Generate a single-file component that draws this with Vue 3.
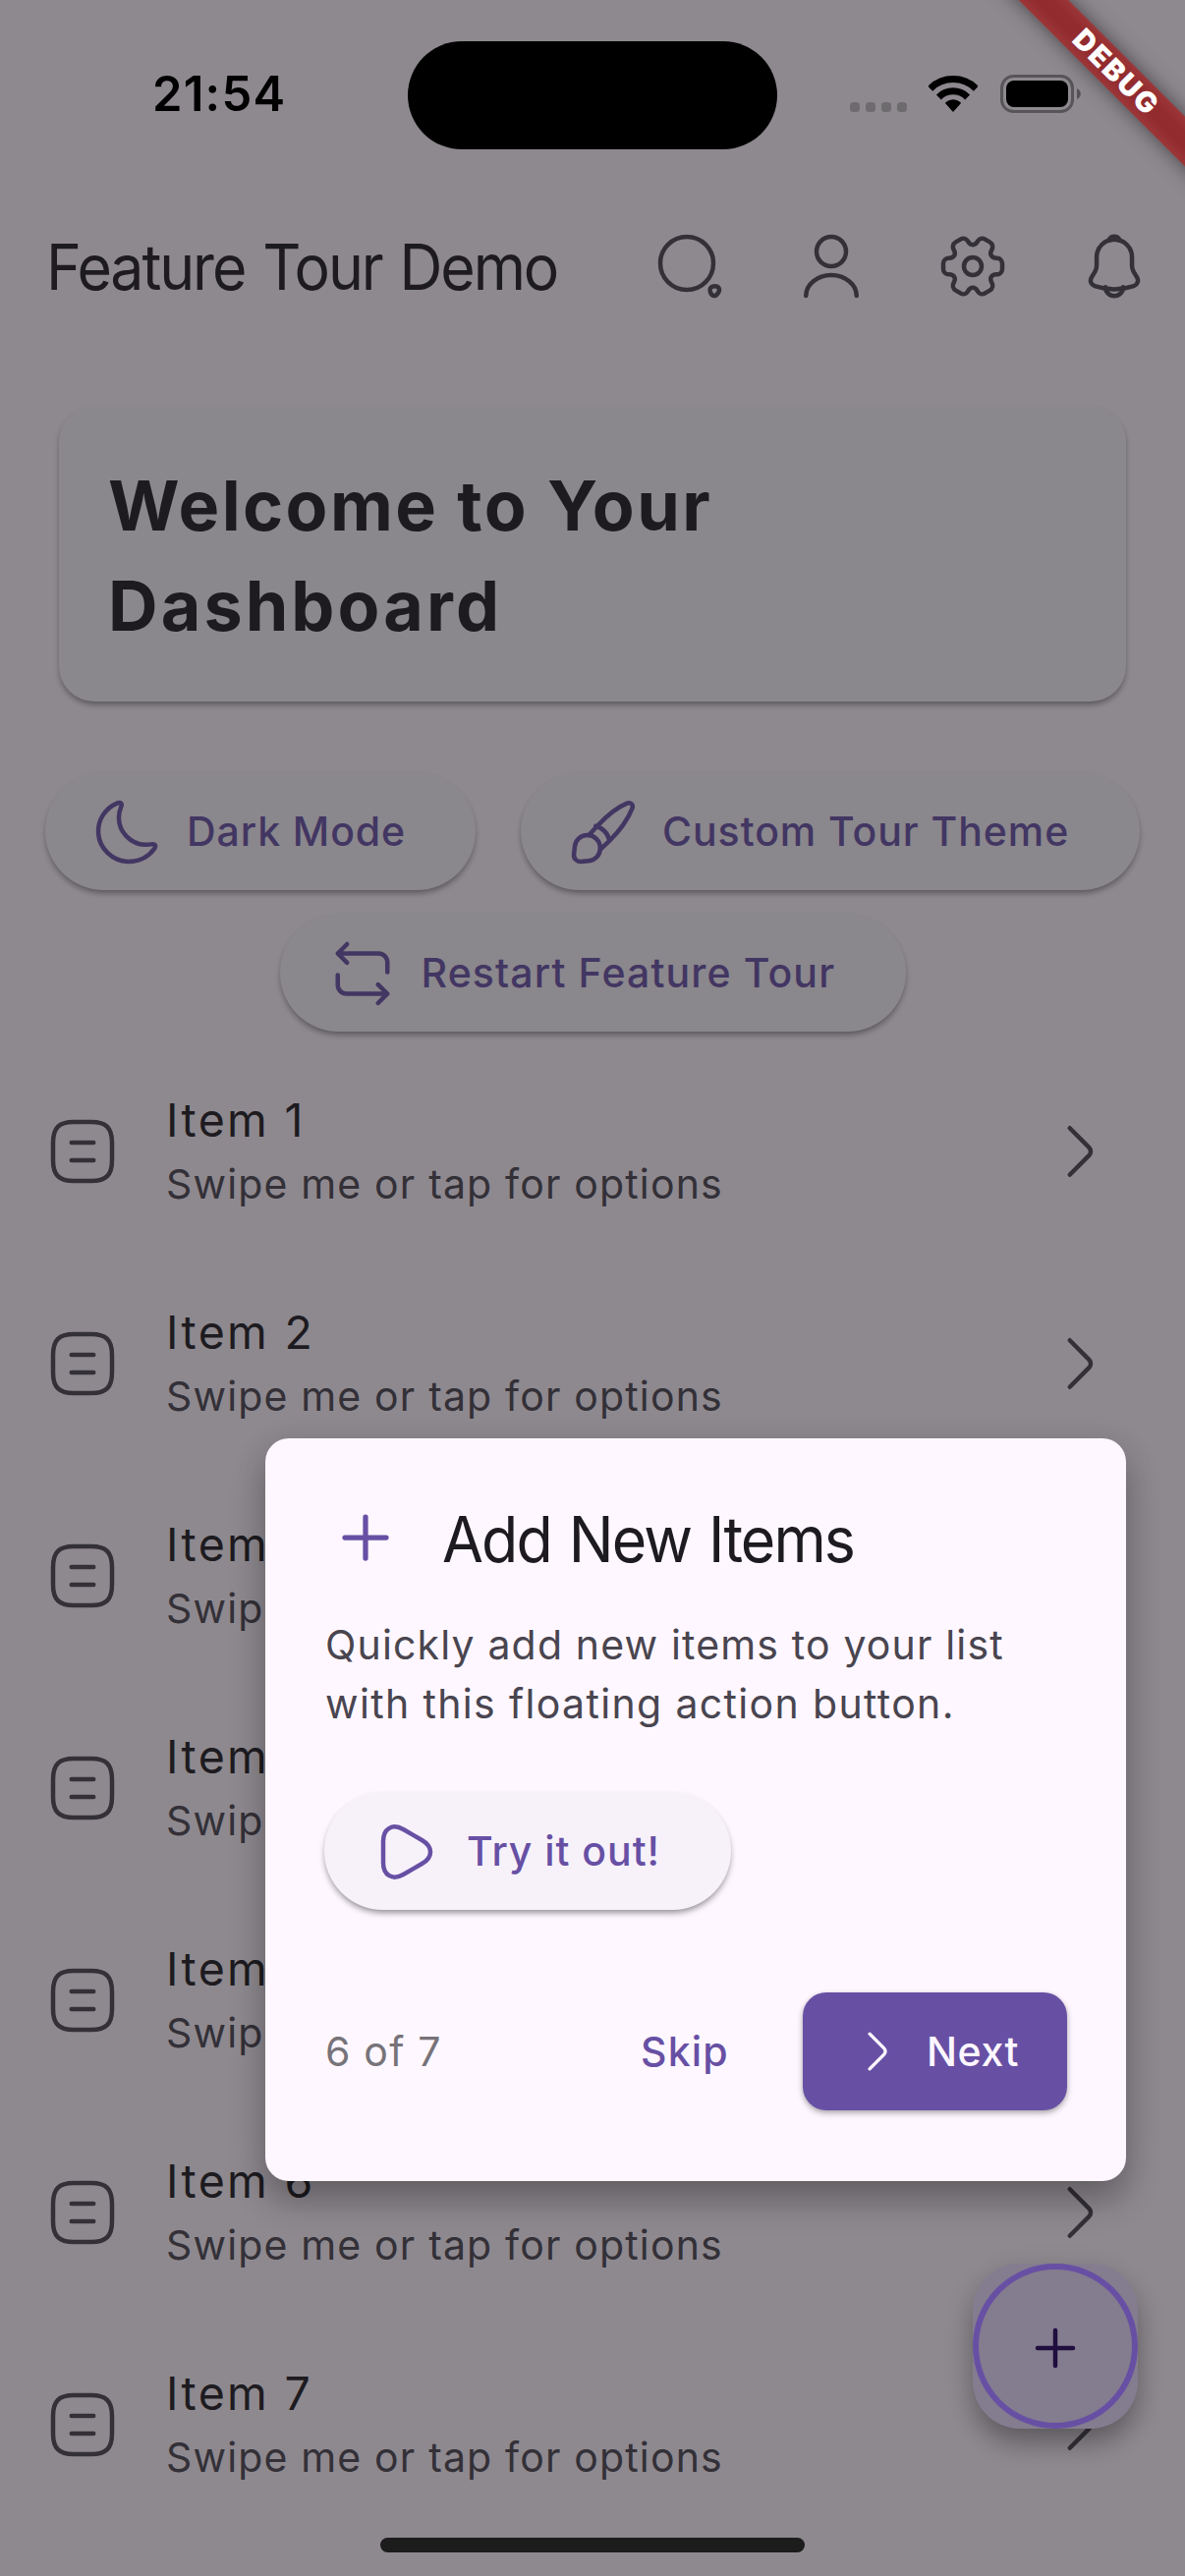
<script setup>
const items = [1, 2, 3, 4, 5, 6, 7]

const actions = [
  {
    name: 'search',
    paths: [
      'M11 20a9 9 0 1 0 0-18 9 9 0 0 0 0 18Z',
      'M18.93 20.69c.53 1.6 1.74 1.76 2.67.36.85-1.28.29-2.33-1.25-2.33-1.14-.01-1.78.88-1.42 1.97Z',
    ],
  },
  {
    name: 'profile',
    paths: [
      'M12 12a5 5 0 1 0 0-10 5 5 0 0 0 0 10Z',
      'M20.59 22c0-3.87-3.85-7-8.59-7s-8.59 3.13-8.59 7',
    ],
  },
  {
    name: 'settings',
    paths: [
      'M12 15a3 3 0 1 0 0-6 3 3 0 0 0 0 6Z',
      'M2 12.88v-1.76c0-1.04.85-1.9 1.9-1.9 1.81 0 2.55-1.28 1.64-2.85-.52-.9-.21-2.07.7-2.59l1.73-.99c.79-.47 1.81-.19 2.28.6l.11.19c.9 1.57 2.38 1.57 3.29 0l.11-.19c.47-.79 1.49-1.07 2.28-.6l1.73.99c.91.52 1.22 1.69.7 2.59-.91 1.57-.17 2.85 1.64 2.85 1.04 0 1.9.85 1.9 1.9v1.76c0 1.04-.85 1.9-1.9 1.9-1.81 0-2.55 1.28-1.64 2.85.52.91.21 2.07-.7 2.59l-1.73.99c-.79.47-1.81.19-2.28-.6l-.11-.19c-.9-1.57-2.38-1.57-3.29 0l-.11.19c-.47.79-1.49 1.07-2.28.6l-1.73-.99a1.899 1.899 0 0 1-.7-2.59c.91-1.57.17-2.85-1.64-2.85-1.05 0-1.9-.86-1.9-1.9Z',
    ],
  },
  {
    name: 'notifications',
    paths: [
      'M12.02 2.91c-3.31 0-6 2.69-6 6v2.89c0 .61-.26 1.54-.57 2.06L4.3 15.77c-.71 1.18-.22 2.49 1.08 2.93 4.31 1.44 8.96 1.44 13.27 0 1.21-.4 1.74-1.83 1.08-2.93l-1.15-1.91c-.3-.52-.56-1.45-.56-2.06V8.91c0-3.3-2.7-6-6-6Z',
      'M13.87 3.2a6.754 6.754 0 0 0-3.7 0c.29-.74 1.01-1.26 1.85-1.26.84 0 1.56.52 1.85 1.26Z',
      'M15.02 19.06c0 1.65-1.35 3-3 3-.82 0-1.58-.34-2.12-.88a3.01 3.01 0 0 1-.88-2.12',
    ],
  },
]
</script>

<template>
  <div class="screen">
    <div class="page">
      <header class="app-bar">
        <h1>Feature Tour Demo</h1>
        <div class="actions">
          <span v-for="a in actions" :key="a.name" class="action">
            <svg class="icon" viewBox="0 0 24 24">
              <path v-for="d in a.paths" :key="d" :d="d" />
            </svg>
          </span>
        </div>
      </header>

      <section class="card">
        <h2>Welcome to Your<br /><span class="wide">Dashboard</span></h2>
      </section>

      <div class="pills">
        <button class="pill dark">
          <svg class="icon" viewBox="0 0 24 24">
            <path d="M2.03 12.42c.36 5.15 4.73 9.34 9.96 9.57 3.69.16 6.99-1.56 8.97-4.27.82-1.11.38-1.85-.99-1.6-.67.12-1.36.17-2.08.14C13 16.06 9 11.97 8.98 7.14c-.01-1.3.26-2.53.75-3.65.54-1.24-.11-1.83-1.36-1.3C4.41 3.86 1.7 7.85 2.03 12.42Z" />
          </svg>
          <span>Dark Mode</span>
        </button>
        <button class="pill theme">
          <svg class="icon" viewBox="0 0 24 24">
            <path d="M21.81 3.94c-1.55 3.87-4.7 8-7.7 10.98l-3.1 2.95M7.1 13l2.95-3.15C13 6.6 16.2 3.75 20.06 2.2c1.2-.5 2.24.5 1.75 1.74" />
            <path d="M9.4 9.9c2.25.55 4.15 2.45 4.7 4.9" />
            <path d="M10.95 17.4c0 2.5-1.75 4.15-3.9 4.35l-2.6.22c-1.45.14-2.55-1-2.42-2.42l.28-2.6c.24-2.3 2-3.9 4.25-3.95 2.4-.04 4.39 1.95 4.39 4.4Z" />
          </svg>
          <span>Custom Tour Theme</span>
        </button>
      </div>
      <div class="pills second">
        <button class="pill restart">
          <svg class="icon" viewBox="0 0 24 24">
            <path d="M3.58 5.16h13.84c1.66 0 3 1.34 3 3v3.32M6.74 2 3.58 5.16l3.16 3.16" />
            <path d="M20.42 18.84H6.58c-1.66 0-3-1.34-3-3v-3.32M17.26 22l3.16-3.16-3.16-3.16" />
          </svg>
          <span>Restart Feature Tour</span>
        </button>
      </div>

      <ul class="list">
        <li v-for="n in items" :key="n">
          <svg class="icon" viewBox="0 0 24 24">
            <path d="M9 22h6c5 0 7-2 7-7V9c0-5-2-7-7-7H9C4 2 2 4 2 9v6c0 5 2 7 7 7ZM8.25 9h7.5M8.25 15h7.5" />
          </svg>
          <div class="texts">
            <div class="name">Item {{ n }}</div>
            <div class="hint">Swipe me or tap for options</div>
          </div>
          <svg class="icon" viewBox="0 0 24 24">
            <path d="m8.91 19.92 6.52-6.52c.77-.77.77-2.03 0-2.8L8.91 4.08" />
          </svg>
        </li>
      </ul>

      <div class="fab">
        <svg class="icon" viewBox="0 0 24 24"><path d="M6 12h12M12 18V6" /></svg>
      </div>
    </div>

    <div class="scrim"></div>
    <div class="ring"></div>

    <section class="dialog">
      <div class="dialog-title">
        <svg class="icon" viewBox="0 0 24 24"><path d="M6 12h12M12 18V6" /></svg>
        <h3>Add New Items</h3>
      </div>
      <p>Quickly add new items to your list<br /><span class="wide">with this floating action button.</span></p>
      <button class="pill try">
        <svg class="icon" viewBox="0 0 24 24">
          <path d="M4 12V8.44c0-4.42 3.13-6.23 6.96-4.02l3.09 1.78 3.09 1.78c3.83 2.21 3.83 5.83 0 8.04l-3.09 1.78-3.09 1.78C7.13 21.79 4 19.98 4 15.56V12Z" />
        </svg>
        <span>Try it out!</span>
      </button>
      <footer>
        <span class="count">6 of 7</span>
        <span class="skip">Skip</span>
        <button class="next">
          <svg class="icon" viewBox="0 0 24 24">
            <path d="m8.91 19.92 6.52-6.52c.77-.77.77-2.03 0-2.8L8.91 4.08" />
          </svg>
          <span>Next</span>
        </button>
      </footer>
    </section>

    <div class="status">
      <span class="time">21:54</span>
      <span class="island"></span>
      <span class="dots"><i v-for="n in 4" :key="n"></i></span>
      <svg class="wifi" viewBox="0 0 50 37">
        <path d="M1.7 13.2a33 33 0 0 1 46.6 0M10.4 21.9a20.7 20.7 0 0 1 29.2 0" fill="none" stroke="#000" stroke-width="7" />
        <path d="M25 37l-7.6-8.4c-.5-.6-.4-1.2.2-1.7a12 12 0 0 1 14.8 0c.6.5.7 1.1.2 1.7Z" />
      </svg>
      <svg class="battery" viewBox="0 0 82 39">
        <rect x="1.5" y="1.5" width="72" height="36" rx="12" fill="none" stroke="#000" stroke-opacity=".38" stroke-width="3" />
        <rect x="6" y="6" width="63" height="27" rx="8" />
        <path d="M78 14c5 2 5 9 0 11Z" fill-opacity=".4" />
      </svg>
    </div>

    <div class="banner">DEBUG</div>
    <div class="home"></div>
  </div>
</template>

<style>
body {
  margin: 0;
}
</style>

<style scoped>
.screen {
  position: relative;
  width: 1206px;
  height: 2622px;
  overflow: hidden;
  background: #fef7ff;
  color: #1d1b20;
  font-family: Inter, 'Liberation Sans', sans-serif;
  font-size: 41px;
}
h1,
h2,
h3,
p,
ul {
  margin: 0;
  padding: 0;
  list-style: none;
}
button {
  border: 0;
  padding: 0;
  font: inherit;
  color: inherit;
}
.icon {
  display: block;
  flex: none;
  width: 72px;
  height: 72px;
  overflow: visible;
  fill: none;
  stroke: currentColor;
  stroke-width: 1.5;
  stroke-linecap: round;
  stroke-linejoin: round;
}
.page {
  padding-top: 187px;
}
.app-bar {
  display: flex;
  justify-content: space-between;
  align-items: center;
  height: 168px;
  padding-left: 47px;
}
h1,
h3 {
  width: 620px;
  margin-top: 2px;
  font-size: 64px;
  font-weight: 400;
  line-height: 84px;
  white-space: nowrap;
  word-spacing: 3px;
  transform: scaleX(0.95);
  transform-origin: 0 50%;
}
h1 {
  width: 583px;
  letter-spacing: -2.19px;
}
h3 {
  width: auto;
  letter-spacing: -1.99px;
}
.actions {
  display: flex;
  color: #49454f;
}
.action {
  padding: 36px;
}
.action:last-child {
  padding-right: 36px;
}
.card {
  box-sizing: border-box;
  width: 1086px;
  height: 301px;
  margin: 58px 60px 72px;
  padding: 51px 50px;
  border-radius: 36px;
  background: #f7f2fa;
  box-shadow: 0 4px 6px -1px rgba(0, 0, 0, 0.42);
}
h2 {
  font-size: 70px;
  font-weight: 700;
  line-height: 102px;
  letter-spacing: 2.4px;
}
h2 .wide {
  letter-spacing: 3.1px;
}
.pills {
  display: flex;
  justify-content: space-evenly;
}
.pills.second {
  margin-top: 24px;
}
.pill {
  display: flex;
  align-items: center;
  box-sizing: border-box;
  height: 120px;
  padding-left: 48px;
  gap: 24px;
  border-radius: 60px;
  background: #f7f2fa;
  color: #6750a4;
  font-weight: 500;
  white-space: nowrap;
  box-shadow: 0 4px 6px -1px rgba(0, 0, 0, 0.42);
}
.pill .icon {
  margin-top: 2px;
}
.dark {
  width: 438px;
  letter-spacing: 0.92px;
}
.theme {
  width: 630px;
  letter-spacing: 0.94px;
}
.restart {
  width: 637px;
  letter-spacing: 1.13px;
}
.list {
  margin-top: 12px;
}
.list li {
  display: flex;
  align-items: center;
  height: 216px;
  padding: 0 72px 0 48px;
  color: #49454f;
}
.list .icon {
  margin-top: 3px;
}
.texts {
  flex: 1;
  margin: -5px 0 0 49px;
}
.name {
  color: #1d1b20;
  font-size: 46.5px;
  line-height: 74px;
  letter-spacing: 2.35px;
}
.hint {
  line-height: 56px;
  letter-spacing: 1.16px;
}
.fab {
  position: absolute;
  left: 990px;
  top: 2304px;
  display: flex;
  align-items: center;
  justify-content: center;
  width: 168px;
  height: 168px;
  border-radius: 48px;
  background: #eaddff;
  color: #21005d;
  box-shadow: 0 16px 28px -2px rgba(0, 0, 0, 0.36), 0 3px 36px rgba(0, 0, 0, 0.07);
}
.fab .icon {
  margin-top: 3px;
}
.scrim {
  position: absolute;
  inset: 0;
  background: rgba(29, 27, 32, 0.5);
}
.ring {
  position: absolute;
  left: 990px;
  top: 2304px;
  box-sizing: border-box;
  width: 168px;
  height: 168px;
  border: 6px solid #6750a4;
  border-radius: 50%;
}
.dialog {
  position: absolute;
  left: 270px;
  top: 1464px;
  box-sizing: border-box;
  width: 876px;
  height: 756px;
  padding: 60px;
  border-radius: 24px;
  background: #fef7ff;
  box-shadow: 0 20px 34px rgba(0, 0, 0, 0.27), 0 4px 36px rgba(0, 0, 0, 0.07);
}
.dialog-title {
  display: flex;
  align-items: center;
  gap: 36px;
  height: 84px;
}
.dialog-title .icon {
  width: 84px;
  height: 84px;
  margin-top: -2px;
  color: #6750a4;
}
p {
  margin: 36px 0 60px 1px;
  color: #49454f;
  line-height: 60px;
  letter-spacing: 1.16px;
}
p .wide {
  letter-spacing: 1.35px;
}
.try {
  width: 414px;
  letter-spacing: 0.95px;
}
.try span {
  margin-left: 1px;
}
footer {
  display: flex;
  align-items: center;
  height: 120px;
  margin-top: 84px;
}
.count {
  width: 321px;
  margin-left: 1px;
  color: #777379;
  letter-spacing: 1.2px;
}
.skip {
  width: 165px;
  color: #6750a4;
  font-weight: 500;
  letter-spacing: 1.19px;
}
.next {
  display: flex;
  align-items: center;
  gap: 24px;
  width: 269px;
  height: 120px;
  padding-left: 48px;
  border-radius: 24px;
  background: #6750a4;
  color: #fef7ff;
  font-weight: 500;
  letter-spacing: 0.6px;
  box-shadow: 0 3px 6px rgba(0, 0, 0, 0.28), 0 1px 4px rgba(0, 0, 0, 0.1);
}
.next .icon {
  width: 54px;
  height: 54px;
}
.status {
  position: absolute;
  left: 0;
  top: 0;
  width: 1206px;
  height: 192px;
  display: flex;
  align-items: flex-start;
}
.time {
  width: 260px;
  margin: 66px 0 0 155px;
  color: #000;
  font-size: 49px;
  font-weight: 600;
  line-height: 60px;
  letter-spacing: 1.18px;
}
.island {
  width: 376px;
  height: 110px;
  margin-top: 42px;
  border-radius: 55px;
  background: #000;
}
.dots {
  display: flex;
  gap: 6px;
  margin: 104px 0 0 74px;
}
.dots i {
  width: 10px;
  height: 10px;
  border-radius: 3.5px;
  background: rgba(0, 0, 0, 0.22);
}
.wifi {
  width: 50px;
  height: 37px;
  margin: 77px 0 0 22px;
}
.battery {
  width: 82px;
  height: 39px;
  margin: 76px 0 0 23px;
}
.banner {
  position: absolute;
  left: 934px;
  top: 54px;
  box-sizing: border-box;
  width: 400px;
  height: 36px;
  padding-left: 5px;
  transform: rotate(45deg);
  background: linear-gradient(#9b3639, #922b2e 35%, #922b2e 65%, #9b3639);
  box-shadow: 0 0 20px rgba(0, 0, 0, 0.5);
  color: #fff;
  font-size: 29px;
  font-weight: 900;
  line-height: 36px;
  letter-spacing: 1.9px;
  text-align: center;
}
.home {
  position: absolute;
  left: 387px;
  top: 2583px;
  width: 432px;
  height: 15px;
  border-radius: 8px;
  background: #1c1c1c;
}
</style>
